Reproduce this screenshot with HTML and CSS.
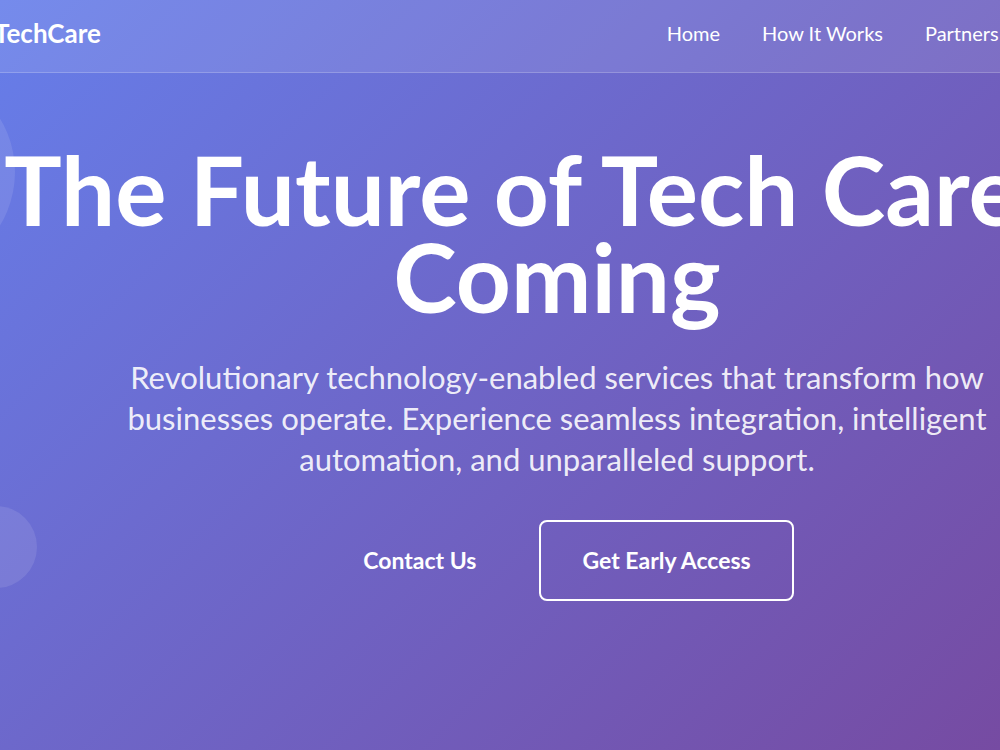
FILE: index.html
```html
<!DOCTYPE html>
<html lang="en">
<head>
    <meta charset="UTF-8">
    <meta name="viewport" content="width=device-width, initial-scale=1.0">
    <title>TechCare | The Future of Tech Care</title>
    <link rel="stylesheet" href="styles.css">
</head>
<body>
<div class="site">
    <header class="topbar">
        <a class="logo" href="#">TechCare</a>
        <nav class="nav-links">
            <a href="#">Home</a>
            <a href="#">How It Works</a>
            <a href="#">Partners</a>
            <a href="#">Contact</a>
        </nav>
    </header>

    <section class="hero">
        <span class="bubble bubble-lg"></span>
        <span class="bubble bubble-sm"></span>

        <h1>The Future of Tech Care is Coming</h1>
        <p>Revolutionary technology-enabled services that transform how businesses operate. Experience seamless integration, intelligent automation, and unparalleled support.</p>

        <div class="hero-actions">
            <a class="btn btn-primary" href="#">Contact Us</a>
            <a class="btn btn-outline" href="#">Get Early Access</a>
        </div>
    </section>
</div>
</body>
</html>
```

FILE: styles.css
```css
body {
    margin: 0;
    min-height: 100vh;
    overflow: hidden;
    font-family: Lato, "Open Sans", sans-serif;
    color: #fff;
    background: linear-gradient(135deg, #667eea 0%, #764ba2 100%);
}

a {
    color: inherit;
    text-decoration: none;
}

.site {
    width: 1190px;
    margin-left: -38px;
}

.topbar {
    display: flex;
    align-items: center;
    justify-content: space-between;
    height: 65px;
    padding: 0 42px 7px 2rem;
    background: rgba(255, 255, 255, 0.1);
    border-bottom: 1px solid rgba(255, 255, 255, 0.2);
}

.logo {
    font-size: 26px;
    font-weight: 700;
}

.nav-links {
    display: flex;
    gap: 42px;
    font-size: 20px;
}

.hero {
    position: relative;
    padding: 72px 2rem 0;
    text-align: center;
}

.bubble {
    position: absolute;
    border-radius: 50%;
    background: rgba(255, 255, 255, 0.1);
}

.bubble-lg {
    left: -153px;
    top: -4px;
    width: 206px;
    height: 206px;
}

.bubble-sm {
    left: -7px;
    top: 433px;
    width: 82px;
    height: 82px;
}

.hero h1 {
    position: relative;
    margin: 0;
    font-size: 96px;
    font-weight: 700;
    line-height: 87px;
}

.hero p {
    position: relative;
    max-width: 900px;
    margin: 38px auto 0;
    font-size: 31px;
    line-height: 41px;
    color: rgba(255, 255, 255, 0.9);
}

.hero-actions {
    position: relative;
    display: flex;
    justify-content: center;
    gap: 20px;
    margin-top: 40px;
}

.btn {
    padding: 24px 41px;
    font-size: 23px;
    font-weight: 700;
    line-height: 29px;
    border: 2px solid transparent;
    border-radius: 8px;
}

.btn-outline {
    border-color: #fff;
}
```
